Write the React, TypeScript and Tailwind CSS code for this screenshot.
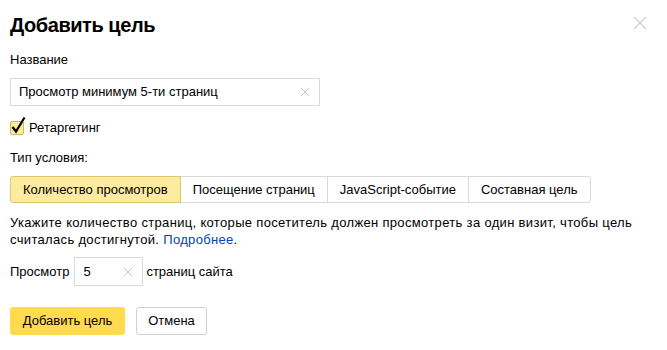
import React, { useState } from "react";

const tabs = [
  "Количество просмотров",
  "Посещение страниц",
  "JavaScript-событие",
  "Составная цель",
];

function Cross({ className }: { className?: string }) {
  return (
    <svg viewBox="0 0 12 12" className={className} fill="none" stroke="currentColor" strokeWidth="1">
      <path d="M1 1L11 11M11 1L1 11" />
    </svg>
  );
}

export default function App() {
  const [name, setName] = useState("Просмотр минимум 5-ти страниц");
  const [pages, setPages] = useState("5");
  const [tab, setTab] = useState(0);
  const [retarget, setRetarget] = useState(true);

  return (
    <div
      className="relative w-[667px] h-[350px] bg-white text-black px-[10px] pt-[13px] text-[13px] leading-[16px]"
      style={{ fontFamily: '"Liberation Sans", Arial, sans-serif' }}
    >
      <h1 className="text-[20px] leading-[24px] font-bold tracking-[-0.45px]">Добавить цель</h1>
      <button className="absolute right-[20px] top-[16px] w-[14px] h-[14px] text-[#c8c8c8]">
        <Cross className="w-[14px] h-[14px]" />
      </button>

      <div className="mt-[15px]">Название</div>

      <div className="mt-[10px] w-[310px] h-[28px] border border-[#d9d9d9] flex items-center pl-[8px] pr-[9px]">
        <input
          value={name}
          onChange={(e) => setName(e.target.value)}
          className="flex-1 outline-none bg-transparent text-[13px]"
        />
        <Cross className="w-[10px] h-[10px] text-[#bdbdbd]" />
      </div>

      <label className="mt-[11px] h-[18px] flex items-end gap-[5px] cursor-pointer" onClick={() => setRetarget(!retarget)}>
        <span className="relative w-[14px] h-[14px] rounded-[2px] border border-[#d6b656] bg-[#ffeba0]">
          {retarget && (
            <svg viewBox="0 0 16 18" className="absolute left-[-1px] top-[-6px] w-[16px] h-[18px]" fill="none" stroke="#000" strokeWidth="2.2">
              <path d="M2.5 11L6 15.5L14.5 1.5" />
            </svg>
          )}
        </span>
        <span className="leading-[15px]">Ретаргетинг</span>
      </label>

      <div className="mt-[15px]">Тип условия:</div>

      <div className="mt-[10px] flex">
        {tabs.map((t, i) => (
          <button
            key={t}
            onClick={() => setTab(i)}
            className={
              "h-[27px] px-[12px] border text-[13px] " +
              (i === 0 ? "rounded-l-[3px] " : "-ml-px ") +
              (i === tabs.length - 1 ? "rounded-r-[3px] " : "") +
              (i === tab
                ? "bg-[#ffeba0] border-[#e0c66b] relative z-10"
                : "bg-white border-[#d9d9d9]")
            }
          >
            {t}
          </button>
        ))}
      </div>

      <p className="mt-[11px] leading-[17px] tracking-[0.33px]">
        Укажите количество страниц, которые посетитель должен просмотреть за один визит, чтобы цель
        <br />
        считалась достигнутой. <a className="text-[#0044bb]" href="#">Подробнее</a>.
      </p>

      <div className="mt-[9px] flex items-center">
        <span>Просмотр</span>
        <div className="ml-[5px] w-[69px] h-[29px] border border-[#d9d9d9] flex items-center pl-[8px] pr-[9px]">
          <input
            value={pages}
            onChange={(e) => setPages(e.target.value)}
            className="w-0 flex-1 outline-none bg-transparent text-[13px]"
          />
          <Cross className="w-[10px] h-[10px] text-[#bdbdbd]" />
        </div>
        <span className="ml-[3px]">страниц сайта</span>
      </div>

      <div className="mt-[21px] flex gap-[11px]">
        <button className="h-[28px] w-[115px] rounded-[3px] bg-[#ffdb4d] text-[13px]">Добавить цель</button>
        <button className="h-[28px] w-[71px] rounded-[3px] border border-[#d0d0d0] bg-white text-[13px]">Отмена</button>
      </div>
    </div>
  );
}
